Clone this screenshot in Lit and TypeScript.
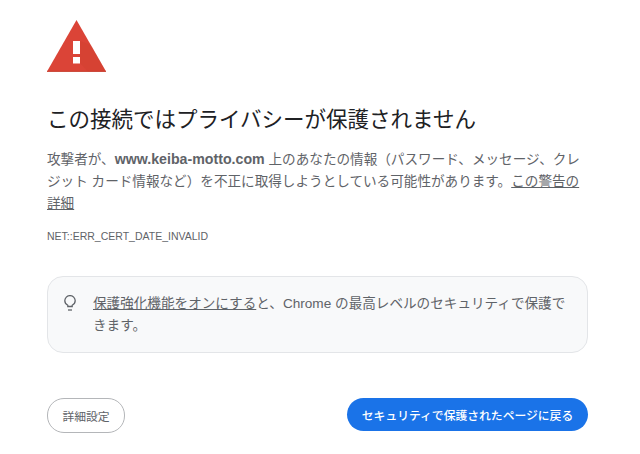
import { LitElement, css, html } from "lit";
import { customElement } from "lit/decorators.js";

@customElement("app-root")
export class AppRoot extends LitElement {
  static styles = css`
    :host {
      display: block;
      width: 640px;
      height: 454px;
      box-sizing: border-box;
      padding: 20px 52px 0 47px;
      background: #fff;
      color: #5f6368;
      font-family: "Liberation Sans", "Noto Sans CJK JP", sans-serif;
      font-size: 13.6px;
      overflow: hidden;
    }
    .warn {
      display: block;
      width: 59px;
      height: 52px;
    }
    h1 {
      margin: 34px 0 0;
      color: #202124;
      font-size: 21.5px;
      font-weight: 400;
      line-height: 28px;
    }
    .msg {
      margin: 15px 0 0;
      height: 66px;
      line-height: 22px;
    }
    .msg b {
      font-size: 14.2px;
      line-height: 0;
    }
    a {
      color: inherit;
      text-decoration: underline;
    }
    .code {
      margin-top: 14px;
      font-size: 10.5px;
      line-height: 14px;
    }
    .tip {
      display: flex;
      gap: 17px;
      margin-top: 33px;
      padding: 16px 16px 15px;
      height: 77px;
      box-sizing: border-box;
      background: #f8f9fa;
      border: 1px solid #e3e5e8;
      border-radius: 16px;
      line-height: 22px;
    }
    .tip svg {
      flex: none;
      width: 12px;
      height: 16px;
      margin-top: 2px;
    }
    .tip p {
      margin: 0;
    }
    .actions {
      display: flex;
      justify-content: space-between;
      margin-top: 45px;
    }
    button {
      height: 33px;
      box-sizing: border-box;
      border-radius: 17px;
      font: inherit;
      font-size: 11.8px;
      padding: 0;
    }
    .ghost {
      width: 78px;
      height: 35px;
      background: #fff;
      border: 1px solid #b4b6b9;
      color: #5f6368;
      font-size: 11.8px;
    }
    .primary {
      width: 241px;
      background: #1a73e8;
      border: none;
      color: #fff;
      font-weight: 500;
    }
  `;

  render() {
    return html`
      <svg class="warn" viewBox="0 0 59 52" aria-hidden="true">
        <path d="M29.500 0 59 51.500H0Z" fill="#db4437" />
        <path d="M33 21 33.500 34 31 37 33 43 41 51.500H59L44 25Z" fill="#c53929" opacity=".22" />
        <path d="M26 21h7v13h-7zM26 37h7v6.500h-7z" fill="#fff" />
        <rect x="0" y="50.800" width="59" height="1" fill="#c53929" />
      </svg>
      <h1>この接続ではプライバシーが保護されません</h1>
      <p class="msg">
        攻撃者が、<b>www.keiba-motto.com</b> 上のあなたの情報（パスワード、メッセージ、クレジット カード情報など）を不正に取得しようとしている可能性があります。<a href="#">この警告の詳細</a>
      </p>
      <div class="code">NET::ERR_CERT_DATE_INVALID</div>
      <div class="tip">
        <svg viewBox="0 0 12 16" fill="none" stroke="#5f6368" stroke-width="1.300" aria-hidden="true">
          <path d="M3.800 10.300C2 9.300.8 7.900.8 5.800a5.200 5.200 0 0 1 10.400 0c0 2.100-1.200 3.500-3 4.500v1.200H3.800z" />
          <path d="M4 15h4" />
        </svg>
        <p><a href="#">保護強化機能をオンにする</a>と、Chrome の最高レベルのセキュリティで保護できます。</p>
      </div>
      <div class="actions">
        <button class="ghost">詳細設定</button>
        <button class="primary">セキュリティで保護されたページに戻る</button>
      </div>
    `;
  }
}
